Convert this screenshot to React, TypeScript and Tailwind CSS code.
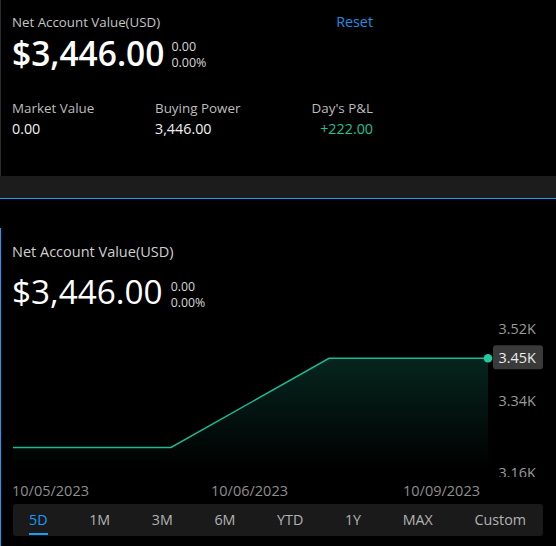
export default function App() {
  const tabs = ["5D", "1M", "3M", "6M", "YTD", "1Y", "MAX", "Custom"];
  return (
    <div className="w-[556px] h-[546px] bg-black overflow-hidden font-['Open_Sans',sans-serif] text-white">
      {/* Top summary panel */}
      <div className="h-[176px] border-l border-[#2c2c2c] pl-[11px] pt-[12px]">
        <div className="w-[361px]">
          <div className="flex justify-between h-[20px] leading-[20px]">
            <span className="text-[13.3px] text-[#c4c4c4]">Net Account Value(USD)</span>
            <span className="text-[14.3px] text-[#1e8fe6]">Reset</span>
          </div>
          <div className="flex items-start mt-[1px]">
            <span className="text-[33.5px] leading-[40px] font-semibold text-white">$3,446.00</span>
            <div className="ml-[7px] mt-[6px] text-[12.5px] leading-[16px] text-[#d6d6d6]">
              <div>0.00</div>
              <div>0.00%</div>
            </div>
          </div>
          <div className="flex mt-[26px]">
            <div className="w-[143px]">
              <div className="text-[13.4px] leading-[18px] text-[#bdbdbd]">Market Value</div>
              <div className="mt-[2px] text-[14.3px] leading-[20px] text-[#f0f0f0]">0.00</div>
            </div>
            <div className="flex-1">
              <div className="text-[13.4px] leading-[18px] text-[#bdbdbd]">Buying Power</div>
              <div className="mt-[2px] text-[14.3px] leading-[20px] text-[#f0f0f0]">3,446.00</div>
            </div>
            <div className="text-right">
              <div className="text-[13.4px] leading-[18px] text-[#bdbdbd]">Day's P&amp;L</div>
              <div className="mt-[2px] text-[14.3px] leading-[20px] text-[#1fc193]">+222.00</div>
            </div>
          </div>
        </div>
      </div>

      {/* separator band */}
      <div className="h-[22px] bg-[#1c1c1c]" />
      <div className="h-px bg-[#1a9bff]" />
      <div className="h-[29px]" />

      {/* Chart panel */}
      <div className="border-l border-[#1a9bff] h-[318px]">
        <div className="pl-[11px] pt-[14px]">
          <div className="text-[14.5px] leading-[20px] text-[#d0d0d0]">Net Account Value(USD)</div>
          <div className="flex items-start mt-[9px]">
            <span className="text-[33.3px] leading-[40px] text-white">$3,446.00</span>
            <div className="ml-[8px] mt-[8px] text-[12.3px] leading-[16px] text-[#d6d6d6]">
              <div>0.00</div>
              <div>0.00%</div>
            </div>
          </div>
        </div>

        <svg width="555" height="193" viewBox="0 1 555 193" className="block">
          <defs>
            <linearGradient id="fillGrad" gradientUnits="userSpaceOnUse" x1="0" y1="48" x2="0" y2="160">
              <stop offset="0" stopColor="#1db993" stopOpacity="0.2" />
              <stop offset="1" stopColor="#1db993" stopOpacity="0" />
            </linearGradient>
            <clipPath id="yclip">
              <rect x="0" y="0" width="555" height="167" />
            </clipPath>
          </defs>
          <path d="M12,137.5 L170,137.5 L328,48.3 L487,48.3 L487,170 L12,170 Z" fill="url(#fillGrad)" />
          <polyline
            points="12,137.5 170,137.5 328,48.3 487,48.3"
            fill="none"
            stroke="#1db993"
            strokeWidth="1.5"
          />
          <circle cx="487" cy="48.3" r="4.3" fill="#22c9a0" />
          <g
            clipPath="url(#yclip)"
            fontFamily="'Open Sans', sans-serif"
            fontSize="14.4"
            fill="#9a9a9a"
          >
            <text x="497.6" y="23.8">3.52K</text>
            <rect x="492" y="35.3" width="50" height="24" rx="3" fill="#3a3a3a" />
            <text x="497.6" y="53.3" fill="#ececec">3.45K</text>
            <text x="497.6" y="95.7">3.34K</text>
            <text x="497.6" y="168.3">3.16K</text>
          </g>
          <g fontFamily="'Open Sans', sans-serif" fontSize="14.5" fill="#8f8f8f">
            <text x="11" y="185.7">10/05/2023</text>
            <text x="210" y="185.7">10/06/2023</text>
            <text x="402" y="185.7">10/09/2023</text>
          </g>
        </svg>

        <div className="ml-[12px] w-[530px] h-[32px] bg-[#1a1a1a] rounded-[3px] flex justify-between items-stretch pl-[16px] pr-[17px]">
          {tabs.map((t, i) => (
            <div
              key={t}
              className={
                i === 0
                  ? "relative flex items-center pb-[1px] text-[14.3px] text-[#1a9bff]"
                  : "relative flex items-center pb-[1px] text-[14.3px] text-[#b3b3b3]"
              }
            >
              {t}
              {i === 0 && <span className="absolute left-0 right-0 bottom-[1px] h-[2px] bg-[#1a9bff]" />}
            </div>
          ))}
        </div>
      </div>
    </div>
  );
}
